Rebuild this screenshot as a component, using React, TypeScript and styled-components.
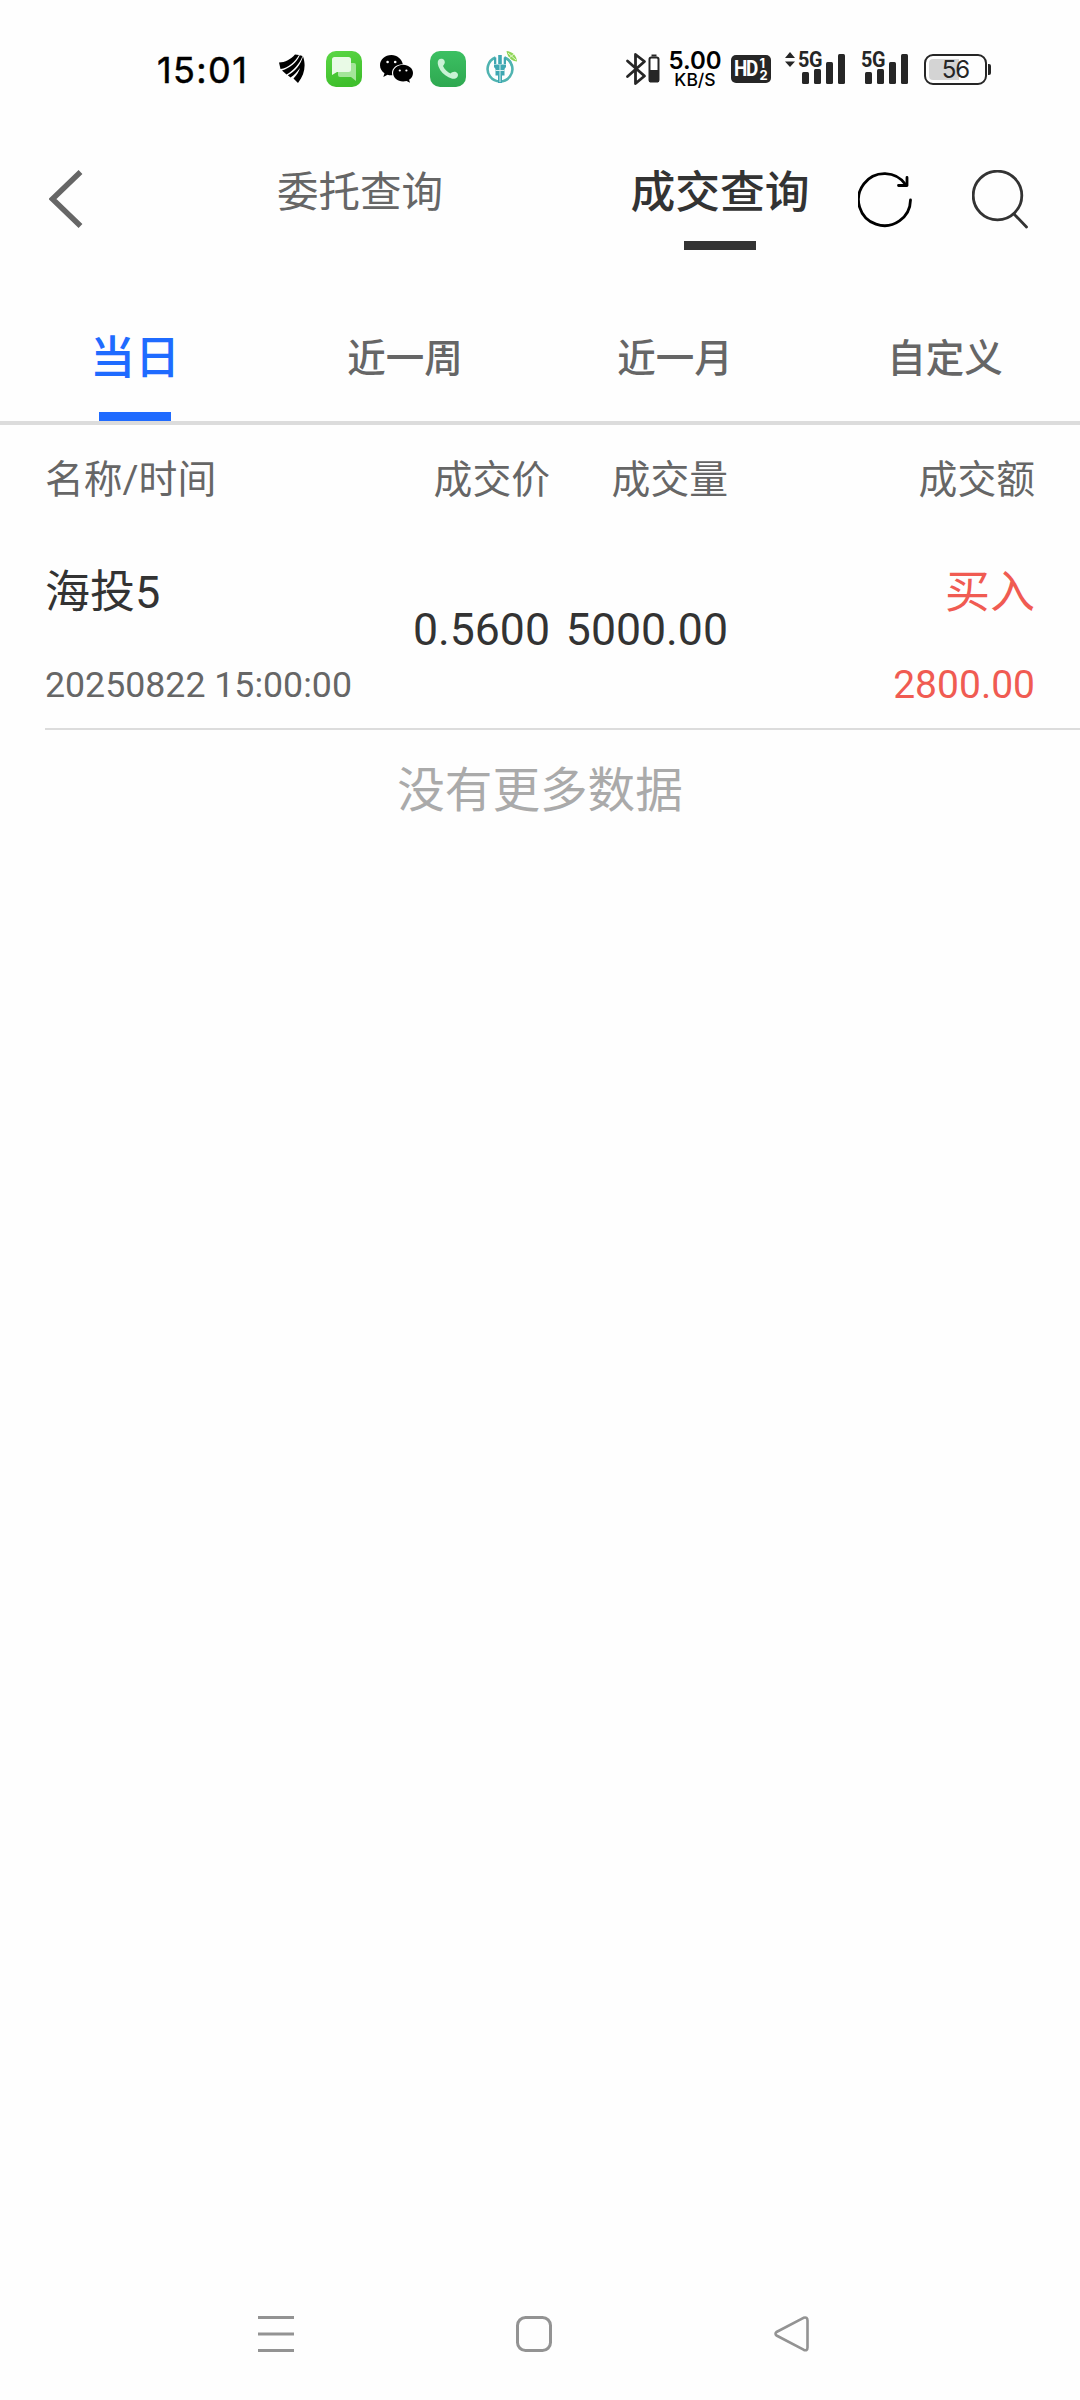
import React from "react";
import styled, { createGlobalStyle } from "styled-components";

const Global = createGlobalStyle`
  * { box-sizing: border-box; }
  body {
    margin: 0;
    background: #fefefe;
    font-family: Roboto, "Noto Sans CJK SC", sans-serif;
    color: #333;
  }
`;

const Screen = styled.div`
  width: 1080px;
  height: 2400px;
  display: flex;
  flex-direction: column;
  overflow: hidden;
  background: #fefefe;
`;

/* ---------- status bar ---------- */

const StatusBar = styled.header`
  height: 140px;
  padding: 0 89px 0 157px;
  display: flex;
  align-items: flex-start;
  justify-content: space-between;
`;

const StatusGroup = styled.div`
  display: flex;
  align-items: center;
  height: 36px;
  margin-top: 51px;
`;

const Clock = styled.time`
  width: 90px;
  margin-right: 32px;
  padding-top: 2px;
  font: 400 36px/36px Inter, sans-serif;
  letter-spacing: 1.4px;
  -webkit-text-stroke: 0.5px #000;
  white-space: nowrap;
  color: #000;
`;

const Icon = styled.svg<{ $gap?: number }>`
  display: block;
  flex: none;
  margin-right: ${(p) => p.$gap ?? 0}px;
`;

const Speed = styled.div`
  width: 54px;
  margin-right: 9px;
  padding-top: 1px;
  display: flex;
  flex-direction: column;
  align-items: center;
  color: #000;
  font-family: Inter, sans-serif;
`;

const SpeedValue = styled.span`
  font-size: 24px;
  font-weight: 600;
  line-height: 19px;
`;

const SpeedUnit = styled.span`
  font-size: 17.5px;
  font-weight: 500;
  line-height: 19px;
`;

const HdBadge = styled.div`
  width: 40px;
  height: 28px;
  margin-right: 14px;
  border-radius: 5px;
  background: #262626;
  color: #fff;
  display: flex;
  align-items: center;
  justify-content: center;
  gap: 2px;
  font: 700 21px/28px Roboto, sans-serif;
`;

const HdLabel = styled.span`
  width: 23px;
  letter-spacing: -1.5px;
  transform: scale(0.9, 1.05);
  transform-origin: left;
`;

const HdLines = styled.span`
  display: flex;
  flex-direction: column;
  font: 700 13px/12px Inter, sans-serif;
`;

const Signal = styled.div<{ $gap: number; $width: number }>`
  position: relative;
  width: ${(p) => p.$width}px;
  height: 36px;
  margin-right: ${(p) => p.$gap}px;
`;

const SignalLabel = styled.span<{ $left: number }>`
  position: absolute;
  left: ${(p) => p.$left}px;
  top: 0;
  font: 700 22px/18px Roboto, sans-serif;
  letter-spacing: -0.5px;
  transform: scaleX(0.9);
  transform-origin: left;
  color: #262626;
`;

const Battery = styled.div`
  width: 63px;
  height: 31px;
  padding: 3px;
  border: 2.5px solid #262626;
  border-radius: 9px;
  display: flex;
`;

const BatteryFill = styled.div`
  width: 100%;
  border-radius: 4px;
  background: linear-gradient(90deg, #d4d4d4 56%, transparent 56%);
  display: flex;
  align-items: center;
  justify-content: center;
  padding-top: 1px;
  font: 400 24px/20px Inter, sans-serif;
  letter-spacing: -1px;
  color: #262626;
`;

const BatteryTip = styled.div`
  width: 3px;
  height: 11px;
  margin-left: 1px;
  border-radius: 0 2px 2px 0;
  background: #262626;
`;

/* ---------- title bar ---------- */

const TitleBar = styled.nav`
  height: 170px;
  display: flex;
  align-items: flex-start;
`;

const BackButton = styled.div`
  width: 180px;
  padding: 30px 0 0 49px;
`;

const TitleTab = styled.div<{ $active?: boolean }>`
  width: 360px;
  height: 110px;
  display: flex;
  flex-direction: column;
  align-items: center;
  justify-content: space-between;
  padding-top: 25px;
  font-size: ${(p) => (p.$active ? 44.8 : 41.5)}px;
  line-height: 56px;
  font-weight: ${(p) => (p.$active ? 500 : 400)};
  color: ${(p) => (p.$active ? "#333" : "#666")};
`;

const Underline = styled.div<{ $color: string }>`
  width: 72px;
  height: 9px;
  background: ${(p) => p.$color};
`;

const TitleActions = styled.div`
  display: flex;
  align-items: flex-start;
  gap: 58px;
  padding-top: 30px;
  margin-left: -42px;
`;

/* ---------- period tabs ---------- */

const Periods = styled.nav`
  height: 115px;
  display: grid;
  grid-template-columns: repeat(4, 270px);
  border-bottom: 4px solid #dcdcdc;
`;

const Period = styled.div<{ $active?: boolean }>`
  display: flex;
  flex-direction: column;
  align-items: center;
  justify-content: space-between;
  padding-top: 21px;
  font-size: ${(p) => (p.$active ? 45 : 38.5)}px;
  line-height: 56px;
  font-weight: 500;
  color: ${(p) => (p.$active ? "#1f6bff" : "#666")};
`;

/* ---------- trade list ---------- */

const columns = "325px 180px 178px 1fr";

const ListHead = styled.div`
  height: 107px;
  padding: 0 45px 6px 45px;
  display: grid;
  grid-template-columns: ${columns};
  align-items: center;
  font-size: 38.8px;
  color: #666;
`;

const Cell = styled.span<{ $right?: boolean }>`
  text-align: ${(p) => (p.$right ? "right" : "left")};
  white-space: nowrap;
`;

const Trade = styled.div`
  height: 198px;
  margin-left: 45px;
  padding-right: 45px;
  display: grid;
  grid-template-columns: ${columns};
  border-bottom: 2px solid #dcdcdc;
`;

const Stack = styled.div<{ $right?: boolean; $color?: string }>`
  display: flex;
  flex-direction: column;
  align-items: ${(p) => (p.$right ? "flex-end" : "flex-start")};
  padding-top: 33px;
  gap: 36px;
  white-space: nowrap;
  color: ${(p) => p.$color ?? "#333"};
`;

const Primary = styled.span`
  font-size: 45px;
  line-height: 56px;
`;

const Secondary = styled.span<{ $size: number; $color?: string }>`
  font-size: ${(p) => p.$size}px;
  line-height: 56px;
  color: ${(p) => p.$color ?? "inherit"};
`;

const Figure = styled.span`
  padding-top: 70px;
  font-size: 44.6px;
  line-height: 56px;
  text-align: right;
`;

const EndNote = styled.p`
  margin: 0;
  padding-top: 31px;
  flex: 1;
  font-size: 47.6px;
  line-height: 60px;
  text-align: center;
  color: #aaa;
`;

/* ---------- system navigation ---------- */

const SystemNav = styled.footer`
  height: 84px;
  padding-left: 258px;
  display: flex;
  align-items: flex-start;
  gap: 222px;
`;

const SignalBars = ({ x }: { x: number }) => (
  <g fill="#262626">
    <rect x={x} y="21" width="7" height="12" rx="1.5" />
    <rect x={x + 12} y="18" width="7" height="15" rx="1.5" />
    <rect x={x + 24} y="11" width="7" height="22" rx="1.5" />
    <rect x={x + 36} y="3" width="7" height="30" rx="1.5" />
  </g>
);

const WingIcon = () => (
  <Icon $gap={21} width="26" height="30" viewBox="0 0 26 30">
    <path d="M0 8.500C6 8.500 12 5 16 .500L20 1C16 8 9 14 1.500 15Z" />
    <path d="M3 16.500C11 14 17.500 9 20.800 1.300L23.500 2C20.500 10 14.500 16.500 7.500 20.500Z" />
    <path d="M8.800 21.200C16 17.500 21.500 11 24 2.500C27 10.500 26 20.500 19 29L14.500 24.500C17.500 21.500 20 17.500 21 14C18 18 15.500 21 11.500 23.500Z" />
  </Icon>
);

const MessageIcon = () => (
  <Icon $gap={18} width="36" height="36" viewBox="0 0 36 36">
    <defs>
      <linearGradient id="msg" x1="0" y1="0" x2="0.3" y2="1">
        <stop offset="0" stopColor="#5bd745" />
        <stop offset="1" stopColor="#3fbf2c" />
      </linearGradient>
    </defs>
    <rect width="36" height="36" rx="10" fill="url(#msg)" />
    <path d="M14 12H28a2 2 0 0 1 2 2V30L25 26H14a2 2 0 0 1-2-2V14a2 2 0 0 1 2-2Z" fill="#a4e59a" />
    <path d="M8.500 6H22.500a2.500 2.500 0 0 1 2.500 2.500V18.500a2.500 2.500 0 0 1-2.500 2.500H11L6 24V8.500A2.500 2.500 0 0 1 8.500 6Z" fill="#e9fae6" />
  </Icon>
);

const WeChatIcon = () => (
  <Icon $gap={17} width="33" height="28" viewBox="0 0 33 28">
    <path d="M11.500 0C5 0 0 4.500 0 10.200c0 3.400 1.800 6 4.500 8L3.300 22l4.200-2.300c1.600.5 3.200.6 4.800.5A9.600 9.600 0 0 1 12 18c0-5 4.600-9 10.800-8.800C21.800 4 17 0 11.500 0Z" />
    <path d="M33 18c0-4.700-4.500-8.300-9.900-8.300-5.600 0-10 3.700-10 8.400s4.400 8.400 10 8.400c1.200 0 2.300-.2 3.500-.5l3.400 1.800-.9-3C31.500 23.300 33 20.800 33 18Z" />
    <g fill="#fefefe">
      <circle cx="7.600" cy="7" r="1.300" />
      <circle cx="15.200" cy="7" r="1.300" />
      <circle cx="19.800" cy="15.500" r="1.100" />
      <circle cx="26.400" cy="15.500" r="1.100" />
    </g>
  </Icon>
);

const PhoneIcon = () => (
  <Icon $gap={19} width="36" height="36" viewBox="0 0 36 36">
    <defs>
      <linearGradient id="tel" x1="0" y1="0" x2="0" y2="1">
        <stop offset="0" stopColor="#3cc062" />
        <stop offset="1" stopColor="#2ea850" />
      </linearGradient>
    </defs>
    <rect width="36" height="36" rx="10" fill="url(#tel)" />
    <path d="M8.500 9C10 7.200 13.500 7.500 14.500 9.800C15.500 12 14.200 13.300 13 15C14.500 18.500 17.500 21.300 20.500 22.500C22 21 24 20.200 26.300 21.200C28.300 22.200 28.500 24.800 27.200 26.300C25 28.600 21.500 28 18.500 26.300C14 23.800 10.500 20.500 8.700 16C7.700 13.300 7.200 10.800 8.500 9Z" fill="#c9f2d5" />
  </Icon>
);

const BankIcon = () => (
  <Icon width="34" height="36" viewBox="0 0 34 36">
    <path d="M10.500 6.500A12.400 12.400 0 1 0 19.500 6.500" fill="none" stroke="#4fb3b0" strokeWidth="2.600" />
    <path d="M19.500 6.500A12.400 12.400 0 0 1 27 15" fill="none" stroke="#4fb3b0" strokeWidth="2.200" />
    <path d="M13.200 4H16.800V13H13.200ZM9 6.500H11.300V13H9ZM18.700 6.500H21V13H18.700ZM9 13.500H21V16L19.500 18V24.500H17V32H13V24.500H10.500V18L9 16Z" fill="#3fa7b2" />
    <path d="M15 14V31M10.500 19.500H19.500" stroke="#d8f0ee" strokeWidth="1" />
    <path d="M21.500 0C27 .500 31.500 4 32 10.500C26 10 22.500 6 21.500 0Z" fill="#8fd657" />
    <path d="M23 2L31 9M24 7L29 3" stroke="#e4f7cf" strokeWidth="1" />
  </Icon>
);

const BluetoothIcon = () => (
  <Icon $gap={7} width="36" height="36" viewBox="0 0 36 36">
    <path d="M2.500 10L19.500 25L10.500 32.500V3.500L19.500 10.500L2.500 25.500" fill="none" stroke="#262626" strokeWidth="2.800" strokeLinejoin="round" strokeLinecap="round" />
    <rect x="24.500" y="6.500" width="9" height="24" rx="1.800" fill="none" stroke="#262626" strokeWidth="2" />
    <path d="M26.500 4.500H31.500" stroke="#262626" strokeWidth="2" />
    <path d="M24 19H34V31H24Z" fill="#262626" />
  </Icon>
);

const trades = [
  { name: "海投5", time: "20250822 15:00:00", price: "0.5600", volume: "5000.00", side: "买入", amount: "2800.00" },
];

export default function App() {
  return (
    <Screen>
      <Global />
      <StatusBar>
        <StatusGroup>
          <Clock>15:01</Clock>
          <WingIcon />
          <MessageIcon />
          <WeChatIcon />
          <PhoneIcon />
          <BankIcon />
        </StatusGroup>
        <StatusGroup>
          <BluetoothIcon />
          <Speed>
            <SpeedValue>5.00</SpeedValue>
            <SpeedUnit>KB/S</SpeedUnit>
          </Speed>
          <HdBadge>
            <HdLabel>HD</HdLabel>
            <HdLines>
              <span>1</span>
              <span>2</span>
            </HdLines>
          </HdBadge>
          <Signal $width={60} $gap={17}>
            <SignalLabel $left={13}>5G</SignalLabel>
            <svg width="60" height="36" viewBox="0 0 60 36">
              <path d="M0 7L5 1L10 7ZM0 10.500H10L5 16Z" fill="#262626" />
              <SignalBars x={17} />
            </svg>
          </Signal>
          <Signal $width={46} $gap={16}>
            <SignalLabel $left={-1}>5G</SignalLabel>
            <svg width="46" height="36" viewBox="0 0 46 36">
              <SignalBars x={3} />
            </svg>
          </Signal>
          <Battery>
            <BatteryFill>56</BatteryFill>
          </Battery>
          <BatteryTip />
        </StatusGroup>
      </StatusBar>

      <TitleBar>
        <BackButton>
          <Icon width="34" height="58" viewBox="0 0 34 58">
            <path d="M31.500 2L3.500 29L31.500 56" fill="none" stroke="#666" strokeWidth="5.500" />
          </Icon>
        </BackButton>
        <TitleTab>委托查询</TitleTab>
        <TitleTab $active>
          成交查询
          <Underline $color="#333" />
        </TitleTab>
        <TitleActions>
          <Icon width="56" height="60" viewBox="0 0 56 60" fill="none" stroke="#000" strokeWidth="2.800" strokeLinecap="round" strokeLinejoin="round">
            <path d="M52.500 30A26 26 0 1 1 48 15" />
            <path d="M49 7.500V15.500H40.500" />
          </Icon>
          <Icon width="56" height="60" viewBox="0 0 56 60" fill="none" stroke="#333" strokeWidth="2.800" strokeLinecap="round">
            <circle cx="25.500" cy="25.500" r="24.300" />
            <path d="M42 44L54.500 57" />
          </Icon>
        </TitleActions>
      </TitleBar>

      <Periods>
        <Period $active>
          当日
          <Underline $color="#1f6bff" />
        </Period>
        <Period>近一周</Period>
        <Period>近一月</Period>
        <Period>自定义</Period>
      </Periods>

      <ListHead>
        <Cell>名称/时间</Cell>
        <Cell $right>成交价</Cell>
        <Cell $right>成交量</Cell>
        <Cell $right>成交额</Cell>
      </ListHead>

      {trades.map((t) => (
        <Trade key={t.time}>
          <Stack>
            <Primary>{t.name}</Primary>
            <Secondary $size={35.7} $color="#666">{t.time}</Secondary>
          </Stack>
          <Figure>{t.price}</Figure>
          <Figure>{t.volume}</Figure>
          <Stack $right $color="#f05b52">
            <Primary>{t.side}</Primary>
            <Secondary $size={39}>{t.amount}</Secondary>
          </Stack>
        </Trade>
      ))}

      <EndNote>没有更多数据</EndNote>

      <SystemNav>
        <Icon width="36" height="36" viewBox="0 0 36 36">
          <path d="M0 1.500H36M0 18H36M0 34.500H36" stroke="#939393" strokeWidth="3" />
        </Icon>
        <Icon width="36" height="36" viewBox="0 0 36 36">
          <rect x="1.500" y="1.500" width="33" height="33" rx="8" fill="none" stroke="#939393" strokeWidth="3" />
        </Icon>
        <Icon width="36" height="36" viewBox="0 0 36 36">
          <path d="M2.500 16L29.500 1.800Q33.500 .500 33.500 4.500V31.500Q33.500 35.500 29.500 33.700L2.500 19.500Q.500 17.800 2.500 16Z" fill="none" stroke="#939393" strokeWidth="2.600" strokeLinejoin="round" />
        </Icon>
      </SystemNav>
    </Screen>
  );
}
